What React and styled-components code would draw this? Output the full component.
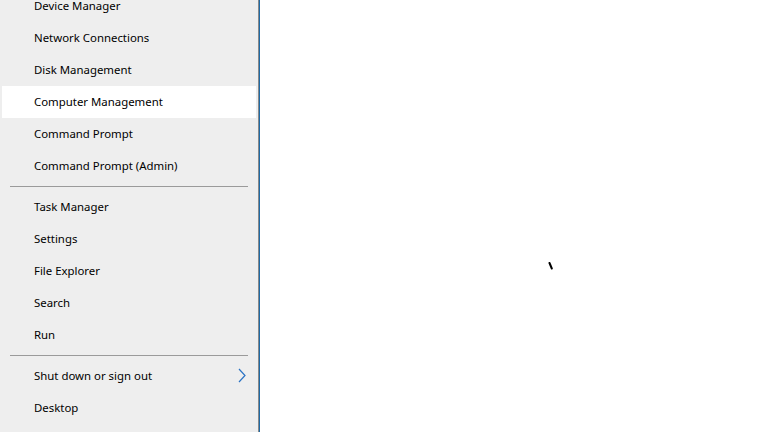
import styled, { createGlobalStyle } from 'styled-components';

const Global = createGlobalStyle`
  html, body { margin: 0; padding: 0; background: #fff; }
  body { font-family: "Noto Sans", "Segoe UI", sans-serif; }
`;

const Screen = styled.div`
  display: flex;
  width: 781px;
  height: 432px;
  overflow: hidden;
`;

const Menu = styled.nav`
  width: 258px;
  height: 432px;
  flex-shrink: 0;
  background: #eeeeee;
  border-right: 1px solid #8a8a8a;
  overflow: hidden;
`;

const List = styled.ul`
  list-style: none;
  margin: -10px 0 0;
  padding: 0 2px;
`;

const Item = styled.li`
  box-sizing: border-box;
  display: flex;
  align-items: center;
  justify-content: space-between;
  height: 32px;
  padding: 0 10px 2px 32px;
  font-size: 11.4px;
  color: #000;
  background: ${(p) => (p.active ? '#ffffff' : 'transparent')};
`;

const Divider = styled.li`
  height: 9px;
  display: flex;
  align-items: center;
  padding: 0 8px;
  &::before {
    content: '';
    flex: 1;
    height: 1px;
    background: #9a9a9a;
  }
`;

const Desk = styled.main`
  flex: 1;
  position: relative;
  background: #fff;
  border-left: 1px solid #1f6aa5;
`;

const Cursor = styled.svg`
  position: absolute;
  left: 288px;
  top: 262px;
`;

const groups = [
  ['Device Manager', 'Network Connections', 'Disk Management', 'Computer Management', 'Command Prompt', 'Command Prompt (Admin)'],
  ['Task Manager', 'Settings', 'File Explorer', 'Search', 'Run'],
  ['Shut down or sign out', 'Desktop'],
];

const Chevron = () => (
  <svg width="8" height="15" viewBox="0 0 8 15">
    <path d="M1 1 L7 7.5 L1 14" fill="none" stroke="#2b73c4" strokeWidth="1.2" />
  </svg>
);

export default function App() {
  return (
    <Screen>
      <Global />
      <Menu>
        <List>
          {groups.map((g, gi) => [
            gi > 0 && <Divider key={'d' + gi} />,
            ...g.map((label) => (
              <Item key={label} active={label === 'Computer Management'}>
                <span>{label}</span>
                {label === 'Shut down or sign out' && <Chevron />}
              </Item>
            )),
          ])}
        </List>
      </Menu>
      <Desk>
        <Cursor width="6" height="8" viewBox="0 0 6 8">
          <path d="M1.5 1 L3.8 6.5" stroke="#000" strokeWidth="2" strokeLinecap="round" />
        </Cursor>
      </Desk>
    </Screen>
  );
}
